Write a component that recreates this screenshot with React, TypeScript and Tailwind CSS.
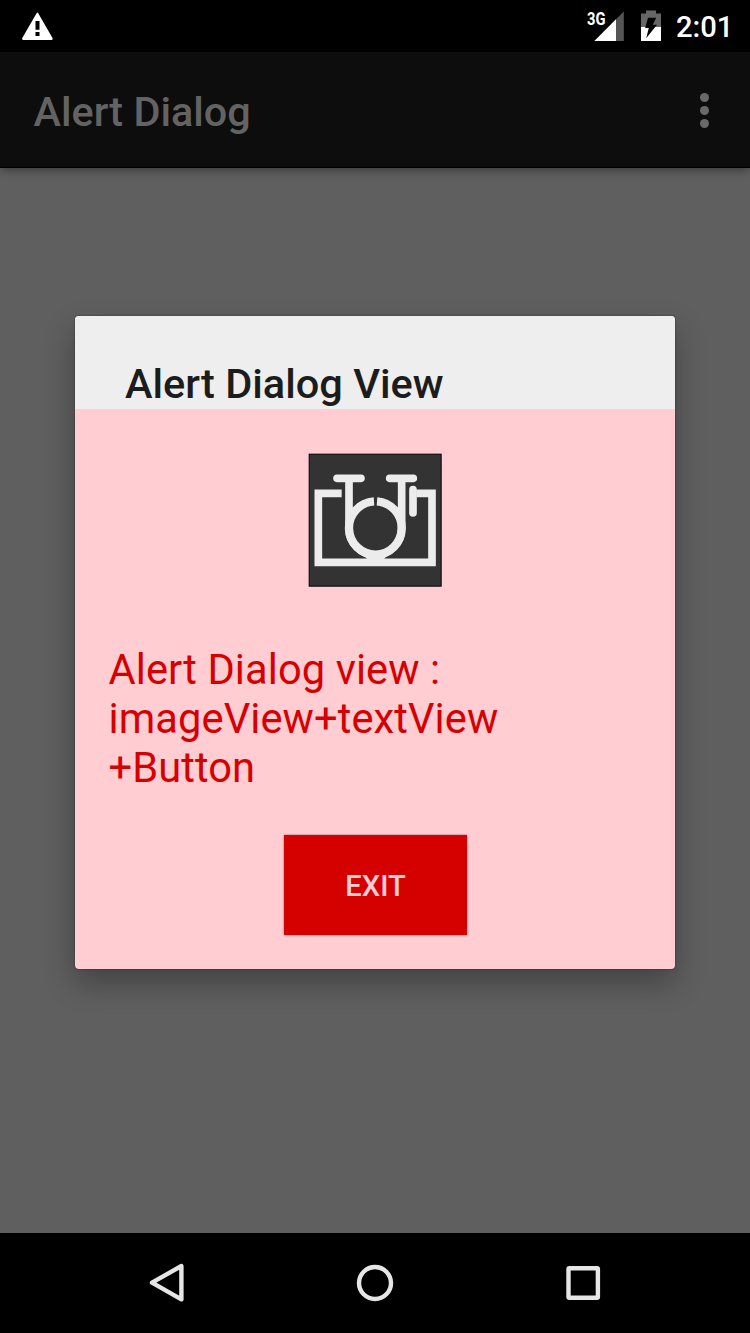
function StatusBar() {
  return (
    <header className="flex h-[52px] shrink-0 items-start bg-black text-white">
      <svg className="ml-[20px] mt-[10px] h-[32px] w-[35px]" viewBox="0 0 35 32">
        <path
          d="M17.4 3.4 L31.8 28.3 Q32.1 29.2 31.2 29.2 H3.4 Q2.5 29.2 3 28.3 Z"
          fill="#fff"
          stroke="#fff"
          strokeWidth="1.6"
          strokeLinejoin="round"
        />
        <path d="M15.5 11h4v8.7h-4zM15.5 22h4v4h-4z" fill="#000" />
      </svg>
      <svg className="ml-auto h-[52px] w-[42px]" viewBox="0 0 42 52" fontFamily="Roboto, sans-serif">
        <path d="M39.8 11.5V41H10.4z" fill="#555" />
        <path d="M32 19.2V41H10.4z" fill="#fff" />
        <text x="3" y="24.8" fontSize="17.5" fontWeight="700" fill="#fff" textLength="18.5" lengthAdjust="spacingAndGlyphs">
          3G
        </text>
      </svg>
      <svg className="ml-[14px] h-[52px] w-[22px]" viewBox="0 0 22 52">
        <path d="M1 13.5h5v-3h10v3h5V27H1z" fill="#666" />
        <path d="M1 27h20v14H1z" fill="#fff" />
        <path d="M8 17.8h8.2l-3.4 6.9H17L6.2 38.2l2.6-10.2H5.2z" fill="#000" />
      </svg>
      <span className="ml-[14px] mr-[17px] mt-[8.5px] w-[57px] whitespace-nowrap text-[29.2px] leading-[37px] font-medium">2:01</span>
    </header>
  );
}

function AppBar() {
  return (
    <div className="z-10 flex h-[116px] shrink-0 items-center justify-between border-b border-black bg-[#0d0d0d] pl-[33.5px] pr-[41.5px] shadow-[0_2px_9px_rgba(0,0,0,0.4)]">
      <h1 className="pt-[4px] text-[41.4px] leading-[50px] font-medium text-[#636363]">Alert Dialog</h1>
      <div className="flex flex-col gap-[3.7px] pt-[2px]">
        <i className="size-[9px] rounded-full bg-[#696969]" />
        <i className="size-[9px] rounded-full bg-[#696969]" />
        <i className="size-[9px] rounded-full bg-[#696969]" />
      </div>
    </div>
  );
}

function BikeCameraIcon() {
  return (
    <svg className="h-[134px] w-[134px]" viewBox="24 23 402 402" fill="none" stroke="#ececec">
      <rect x="27.5" y="26.5" width="396" height="396" fill="#333" stroke="#000" strokeWidth="3" />
      <path d="M125 144H55V351H396V144H349" strokeWidth="23" />
      <path d="M111 99H183M269 99H340M339 133V203" strokeWidth="23" strokeLinecap="round" />
      <path d="M147 99V250A79 79 0 0 0 305 250V99" strokeWidth="23" />
      <path d="M222 168A80 80 0 0 0 147 250A80 80 0 0 0 227 328A80 80 0 0 0 305 250A80 80 0 0 0 231 168" strokeWidth="25" />
      <path d="M190 326Q227 341 264 326L250 344H203Z" fill="#ececec" stroke="none" />
    </svg>
  );
}

function AlertDialog() {
  return (
    <section className="flex h-[652.5px] w-[600px] flex-col overflow-hidden rounded-[4px] bg-[#ffcdd2] shadow-[0_0_2px_rgba(0,0,0,0.5),0_14px_30px_rgba(0,0,0,0.3)]">
      <h2 className="h-[93px] shrink-0 bg-[#eee] pl-[50px] pt-[43px] text-[41.5px] leading-[50px] font-medium text-[#1c1c1c]">
        Alert Dialog View
      </h2>
      <div className="flex flex-col items-center pt-[44px]">
        <BikeCameraIcon />
        <p className="mt-[58px] w-full pl-[33.5px] text-[41.67px] leading-[49px] tracking-[0.07px] text-[#d50000]">
          Alert Dialog view :<br />
          imageView+textView
          <br />
          +Button
        </p>
        <button className="mt-[43px] h-[100px] w-[183px] bg-[#d50000] pl-px pt-[3px] text-[29.17px] font-medium text-[#ffcdd2] shadow-[0_0_2px_rgba(0,0,0,0.45)]">
          EXIT
        </button>
      </div>
    </section>
  );
}

function NavBar() {
  return (
    <nav className="flex h-[100px] shrink-0 items-center justify-between bg-black px-[146px]">
      <svg className="size-[42px]" viewBox="0 0 42 42" fill="none" stroke="#e6e6e6" strokeWidth="4.4" strokeLinejoin="round">
        <path d="M35.4 4V37.4L6 20.7Z" />
      </svg>
      <svg className="size-[42px]" viewBox="0 0 42 42" fill="none" stroke="#e6e6e6" strokeWidth="4.4">
        <circle cx="21" cy="21" r="16" />
      </svg>
      <svg className="size-[42px]" viewBox="0 0 42 42" fill="none" stroke="#e6e6e6" strokeWidth="4.4" strokeLinejoin="round">
        <rect x="6.5" y="6.3" width="29.4" height="29.4" rx="1" />
      </svg>
    </nav>
  );
}

export default function App() {
  return (
    <div className="flex h-[1333px] w-[750px] flex-col overflow-hidden bg-[#5f5f5f] font-[Roboto,sans-serif]">
      <StatusBar />
      <AppBar />
      <main className="flex grow items-start justify-center pt-[148px]">
        <AlertDialog />
      </main>
      <NavBar />
    </div>
  );
}
